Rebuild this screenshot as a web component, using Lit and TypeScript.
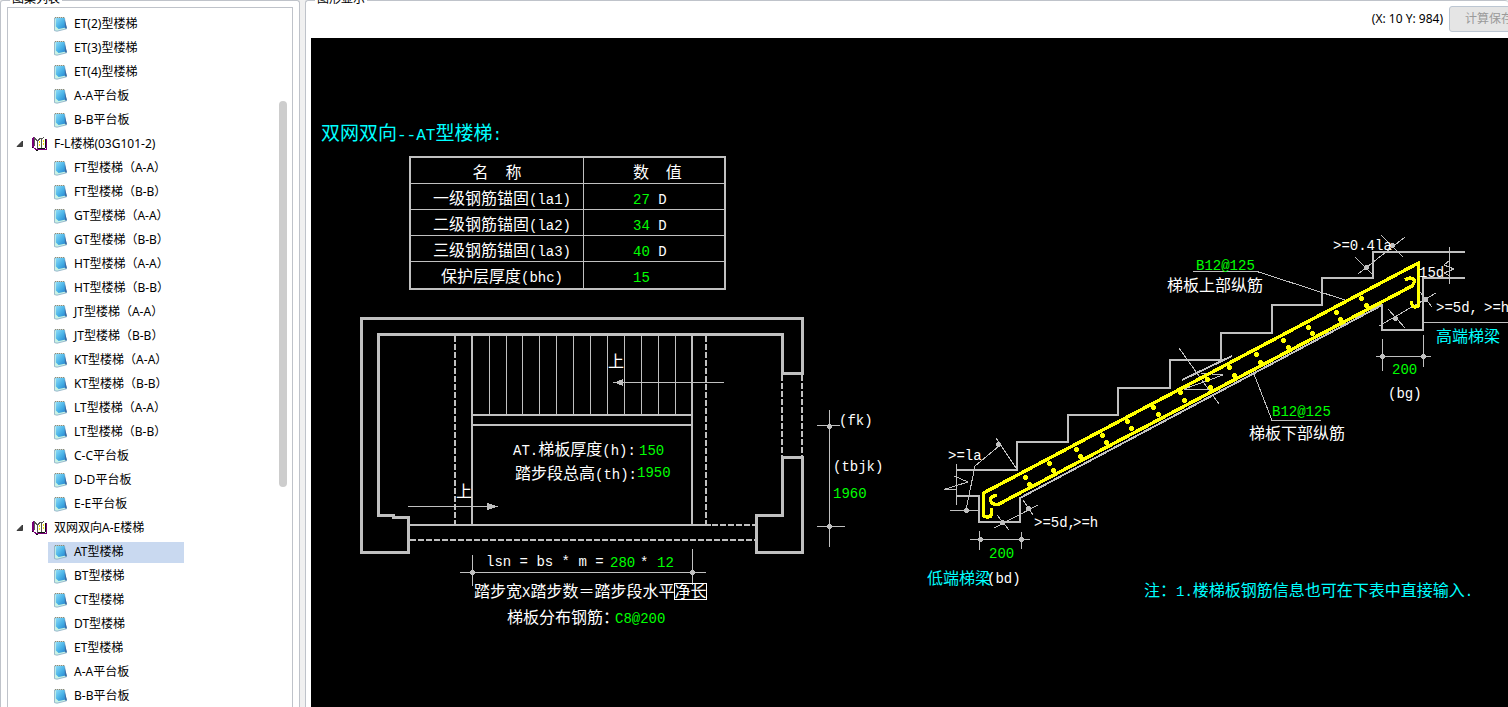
import { LitElement, html, svg, css } from "lit";
import { customElement, property, state } from "lit/decorators.js";
import { classMap } from "lit/directives/class-map.js";

type Row = { id: number; label: string; group?: boolean };

const ROWS: Row[] = [
  "ET(2)型楼梯", "ET(3)型楼梯", "ET(4)型楼梯", "A-A平台板", "B-B平台板",
  "#F-L楼梯(03G101-2)",
  "FT型楼梯（A-A）", "FT型楼梯（B-B）", "GT型楼梯（A-A）", "GT型楼梯（B-B）",
  "HT型楼梯（A-A）", "HT型楼梯（B-B）", "JT型楼梯（A-A）", "JT型楼梯（B-B）",
  "KT型楼梯（A-A）", "KT型楼梯（B-B）", "LT型楼梯（A-A）", "LT型楼梯（B-B）",
  "C-C平台板", "D-D平台板", "E-E平台板",
  "#双网双向A-E楼梯",
  "AT型楼梯", "BT型楼梯", "CT型楼梯", "DT型楼梯", "ET型楼梯", "A-A平台板", "B-B平台板",
].map((s, id) => ({ id, label: s.replace("#", ""), group: s.startsWith("#") }));

/* Splits a label into Latin and Chinese runs; each has its own font size. */
const split = (t: string) => t.match(/[\x20-\x7e]+|[^\x20-\x7e]+/g) ?? [];
const isLatin = (t: string) => /^[\x20-\x7e]/.test(t);

const noteIcon = html`<svg class="note" viewBox="0 0 14 16" width="14" height="16" aria-hidden="true">
  <defs><linearGradient id="n" x1="0" y1="0" x2="1" y2="1">
    <stop offset="0" stop-color="#8fdcf8"/><stop offset=".5" stop-color="#4bb4e8"/><stop offset="1" stop-color="#2483cc"/>
  </linearGradient></defs>
  <path d="M.5 2 L.5 14.6 L3 15.2 L12.6 12.8 L11.5 9 L10.5 2z" fill="#c9f2e4" stroke="#86a9c4" stroke-width=".8"/>
  <path d="M1.8 2 L10.4 2 L11.8 11.6 L4.6 13 L1.8 10.5z" fill="url(#n)"/>
  <path d="M10.6 3 L13 12.2 L11 12.6z" fill="#3c6fa8"/>
  <path d="M1 1.5 H11" stroke="#8c8d74" stroke-width="1.2" stroke-dasharray="1.2 .8"/>
</svg>`;

const bookIcon = html`<svg class="book" viewBox="0 0 16 16" width="16" height="16" aria-hidden="true" shape-rendering="crispEdges">
  <path d="M2 1 L5 4 V13 L2 11z" fill="#fff"/>
  <path d="M6 4 L8 2 H9 V11 L6 13z M10 3 L13 2 V11 L10 12z" fill="#fffff0"/>
  <path d="M2.5 1 V10 M2 1.5 L5 4.5 M5.5 4 V13 M6 4.5 L8.5 2 M9.5 2 V12 M10 2.5 L12.5 1.5" fill="none" stroke="#555"/>
  <path d="M7.5 5 V11 M11.5 4 V10" stroke="#f0e000" stroke-dasharray="2 1"/>
  <path d="M0.5 2 V11 M1.5 1 V12 M2 12.5 H4 M3 13.5 H15 M14.5 3 V14" fill="none" stroke="#780078"/>
  <path d="M13.5 3 V12 M6 12.5 H13 M4 14.5 H6 M0.5 11 V12" stroke="#111"/>
</svg>`;

@customElement("atlas-tree")
export class AtlasTree extends LitElement {
  @state() private selected = 22;

  static styles = css`
    :host { display: block; height: 100%; overflow: hidden; }
    .tree { list-style: none; margin: 0; padding: 4px 0 0; }
    .row { display: flex; align-items: center; height: 24px; padding-left: 40px; }
    .row.group { padding-left: 8px; }
    button {
      display: flex; align-items: center; height: 21px; width: 136px; padding: 0 0 0 6px;
      border: 0; background: none; color: #000; text-align: left; white-space: nowrap;
      font: 12px/20px "Noto Sans", "Noto Sans CJK SC", sans-serif;
    }
    .selected button { background: #c9d9f0; }
    .note { flex: none; margin-right: 6px; }
    .book { flex: none; margin: 0 6px 0 2px; }
    .arrow { flex: none; }
  `;

  render() {
    return html`<ul class="tree" role="tree">
      ${ROWS.map((r) => html`
        <li role="treeitem" aria-selected=${r.id === this.selected}
            class=${classMap({ row: true, group: !!r.group, selected: r.id === this.selected })}>
          ${r.group ? html`<svg class="arrow" viewBox="0 0 8 8" width="8" height="8" aria-hidden="true"><path d="M6.5 1 V6.5 H1z" fill="#444" stroke="#222" stroke-width=".8"/></svg>` : ""}
          <button type="button" @click=${() => (this.selected = r.id)}>
            ${r.group ? bookIcon : noteIcon}${r.label}
          </button>
        </li>`)}
    </ul>`;
  }
}

type Label = [number, number, string, string?];

const LABELS: Label[] = [
  [513, 455, "AT.梯板厚度(h):"], [639, 455, "150", "value"],
  [515, 479, "踏步段总高(th):"], [637, 477, "1950", "value"],
  [608, 367, "上"], [456, 497, "上"],
  [839, 425, "(fk)"], [833, 471, "(tbjk)"], [833, 498, "1960", "value"],
  [486, 566, "lsn = bs * m ="], [610, 567, "280", "value"], [640, 567, "*"], [657, 567, "12", "value"],
  [474, 597, "踏步宽X踏步数＝踏步段水平净长"],
  [507, 623, "梯板分布钢筋："], [615, 623, "C8@200", "value"],
  [948, 460, ">=la"], [1034, 527, ">=5d,"], [1073, 527, ">=h"],
  [989, 558, "200", "value"], [927, 584, "低端梯梁", "note"], [987, 583, "(bd)"],
  [1272, 416, "B12@125", "value"], [1249, 439, "梯板下部纵筋"],
  [1196, 270, "B12@125", "value"], [1167, 291, "梯板上部纵筋"],
  [1333, 250, ">=0.4la"], [1419, 277, "15d"],
  [1436, 312, ">=5d,"], [1484, 312, ">=h"], [1436, 342, "高端梯梁", "note"],
  [1392, 374, "200", "value"], [1388, 398, "(bg)"],
  [1144, 596, "注：1.楼梯板钢筋信息也可在下表中直接输入.", "note"],
];

const TREADS = [489, 506, 522, 539, 556, 573, 590, 607, 624, 641, 658, 675];

const BARS = [
  [1025, 477], [1029, 484], [1049, 463], [1053, 470], [1076, 449], [1080, 456],
  [1102, 435], [1106, 442], [1127, 421], [1131, 428], [1153, 407], [1158, 414],
  [1180, 392], [1184, 400], [1207, 379], [1210, 387], [1229, 367], [1234, 375],
  [1256, 354], [1260, 362], [1283, 340], [1288, 347], [1308, 327], [1312, 333],
  [1336, 312], [1340, 319], [1361, 298], [1366, 305],
];

const DOTS = [
  [829, 426], [829, 526], [472, 572], [692, 572], [998, 444], [966, 510],
  [1002, 522], [1028, 508], [980, 539], [1021, 539], [1392, 245], [1366, 267],
  [1395, 318], [1425, 299], [1382, 356], [1423, 356],
];

@customElement("stair-drawing")
export class StairDrawing extends LitElement {
  @property({ attribute: false }) anchors: [string, string, string][] = [
    ["一级钢筋锚固(la1)", "27", " D"], ["二级钢筋锚固(la2)", "34", " D"],
    ["三级钢筋锚固(la3)", "40", " D"], ["保护层厚度(bhc)", "15", ""],
  ];

  static styles = css`
    :host {
      display: block; position: relative; height: 100%; overflow: hidden; background: #000; color: #fff;
      font: 16px/24px "Noto Sans CJK SC", sans-serif;
    }
    .sheet { display: block; width: 100%; height: 100%; }
    .latin { font-family: "Liberation Mono", monospace; font-size: 14px; line-height: 1; white-space: pre; }
    text { fill: #fff; white-space: pre; }
    text.value { fill: #0f0; }
    text.note, text.title { fill: #0ff; }
    .title { font-size: 19px; }
    .title .latin { font-size: 16px; }
    .line { fill: none; stroke: #c0c0c0; shape-rendering: crispEdges; }
    .w1 { stroke-width: 1; }
    .w2 { stroke-width: 2; }
    .w3 { stroke-width: 3; }
    .dash { stroke-dasharray: 6 2; }
    .solid { fill: #c0c0c0; shape-rendering: crispEdges; }
    .steel { fill: none; stroke: #ff0; stroke-width: 3.4; shape-rendering: crispEdges; }
    .bar { fill: #ff0; shape-rendering: crispEdges; }
    .frame { stroke: #fff; }

    .anchors {
      position: absolute; left: 98px; top: 118px; width: 317px; border: 2px solid #c0c0c0;
      border-spacing: 0; table-layout: fixed;
    }
    .anchors th, .anchors td {
      height: 25px; padding: 0; font-weight: 400; line-height: 24px; border-bottom: 1px solid #c0c0c0; white-space: pre;
    }
    .anchors tr:last-child > * { border-bottom: 0; }
    .anchors .name { width: 172px; text-align: center; border-right: 1px solid #c0c0c0; }
    .anchors td.name { box-sizing: border-box; width: 173px; height: 26px; padding-left: 10px; }
    .anchors .amount { text-align: left; padding-left: 49px; }
    .green { color: #0f0; }
  `;

  private htmlRuns(t: string) {
    return split(t).map((r) => (isLatin(r) ? html`<span class="latin">${r}</span>` : r));
  }

  private svgRuns(t: string) {
    return split(t).map((r) => (isLatin(r) ? svg`<tspan class="latin">${r}</tspan>` : svg`<tspan>${r}</tspan>`));
  }

  private plan() {
    return svg`
      <path class="line w3" d="M782.5 373.5 H802.5 V318.5 H361.5 V552.5 H408.5 V517.5 H393.5 L393.5 515.5 H378.5 V334.5 H782.5z"/>
      <path class="line w3" d="M782.5 457.5 H802.5 V552.5 H756.5 V515.5 H782.5z"/>
      <path class="line w2 dash" d="M455 336 V525 M706 336 V525 M782 375 V456 M802 375 V456 M712 525 H756 M410 540 H756"/>
      <path class="line w2" d="M472 336 V525 M692 336 V525 M472 415 H692 M472 425 H692 M410 525 H711"/>
      <path class="line w1" d=${TREADS.map((x) => `M${x}.5 336 V414`).join(" ")}/>
      <path class="line w1" d="M613 382.5 H724 M408 506.5 H498"/>
      <path class="solid" d="M614 382.5 L623 379 V386z M498 506.5 L487 503 V510z"/>
      <path class="line w1" d="M829.5 410 V547 M817 425.5 H840 M817 526.5 H845"/>
      <path class="line w1" d="M460 572.5 H706 M472.5 555 V586 M692.5 549 V585"/>
      <rect class="line w1 frame" x="674.5" y="583.5" width="32" height="16"/>`;
  }

  private section() {
    return svg`
      <path class="line w2" d="M957 470 H1017 V442 H1068 V415 H1118 V388 H1170 V360 H1221 V333 H1272 V305 H1322 V278 H1373 V252 H1465"/>
      <path class="line w2" d="M1465 278 H1423 V330 H1382 V305 L1020 498 V522 H979 V496 H957"/>
      <path class="line w2" d="M1182 380 L1232 356"/>
      <path class="line w1" d="M1179 348 L1219 404 M1201 373 L1223 375 L1184 389 H1208"/>
      <path class="line w1" d="M1254 374 L1272 420.5 H1321 M1193 271.5 H1257 L1345 300"/>
      <path class="line w1" d="M956.5 464 V505 M954 476 L968 482 L944 489.5 H956 M950 510.5 H978 M966 510 L975 466 L999 446 M996 438 L1016 468"/>
      <path class="line w1" d="M994 528 L1038 505 M1023 500 L1033 515 M997 515 L1009 530"/>
      <path class="line w1" d="M970 539.5 H1030 M979.5 531 V550 M1021.5 532 V549"/>
      <path class="line w1" d="M1449.5 247 V284 M1450 260 L1444 265 L1454 269 L1444 273 L1450 276"/>
      <path class="line w1" d="M1381 235 L1403 257 M1405 237 L1358 274 M1355 257 L1373 275"/>
      <path class="line w1" d="M1379 326 L1436 293 M1388 309 L1405 328 M1417 288 L1432 307"/>
      <path class="line w1" d="M1423 322.5 H2400 M1376 356.5 H1431 M1382.5 339 V371 M1423.5 335 V367"/>
      <path class="steel" d="M991.5 508 V514 Q991.5 517 987 517 Q983.5 517 983.5 514 V493 L1418.5 263 V304 Q1418.5 307 1415 307 Q1411.5 307 1411.5 301"/>
      <path class="steel" d="M997 495.5 Q990 496 990.5 500 Q991 504.5 998 504.5 L1412 286 Q1415 283 1414 280 Q1411 276 1405 280"/>
      ${BARS.map(([x, y]) => svg`<circle class="bar" cx=${x + 0.5} cy=${y + 0.5} r="2.4"/>`)}`;
  }

  render() {
    return html`
      <svg class="sheet" role="img" aria-label="双网双向--AT型楼梯">
        <g transform="translate(-311 -38)">
          ${this.plan()} ${this.section()}
          ${DOTS.map(([x, y]) => svg`<circle class="solid" cx=${x + 0.5} cy=${y + 0.5} r="2.5"/>`)}
          <text class="title" x="321" y="140">${this.svgRuns("双网双向--AT型楼梯:")}</text>
          ${LABELS.map(([x, y, t, c]) => svg`<text class=${c ?? "plain"} x=${x} y=${y}>${this.svgRuns(t)}</text>`)}
        </g>
      </svg>
      <table class="anchors">
        <tr><th class="name" scope="col">${this.htmlRuns("名  称")}</th><th class="amount" scope="col">${this.htmlRuns("数  值")}</th></tr>
        ${this.anchors.map(([name, value, unit]) => html`<tr><td class="name">${this.htmlRuns(name)}</td><td class="amount"><span class="latin green">${value}</span><span class="latin">${unit}</span></td></tr>`)}
      </table>`;
  }
}

@customElement("app-root")
export class AppRoot extends LitElement {
  static styles = css`
    :host {
      display: grid; grid-template-columns: 300px minmax(0, 1fr); gap: 5px; height: 100vh; overflow: hidden;
      background: #f0f0f0; color: #000; font: 12px/16px "Noto Sans", "Noto Sans CJK SC", sans-serif;
    }
    .panel { position: relative; box-sizing: border-box; min-height: 0; background: #fff; border: solid #bfc3ca; border-width: 1px 1px 0; border-radius: 3px 3px 0 0; }
    .caption { position: absolute; left: 9px; top: -10px; margin: 0; padding: 0 2px; background: #fff; font: inherit; }
    .list { padding: 6px 6px 0; }
    .box { display: grid; grid-template-columns: minmax(0, 1fr) 8px; box-sizing: border-box; height: 100%; padding-right: 5px; border: 1px solid #bfc3ca; border-bottom: 0; }
    .thumb { height: 386px; margin-top: 93px; border-radius: 4px; background: #cdcdcd; }
    .view { display: grid; grid-template-rows: 37px minmax(0, 1fr); border-right: 0; padding-left: 5px; }
    .bar { display: flex; justify-content: flex-end; align-items: center; gap: 6px; margin-right: -21px; padding-bottom: 1px; white-space: nowrap; }
    .save { height: 26px; padding: 0 15px; border: 1px solid #bcc6d2; border-radius: 3px; background: #e5e5e5; color: #9a9a9a; font: inherit; }
  `;

  render() {
    return html`
      <section class="panel list">
        <h2 class="caption">图集列表</h2>
        <div class="box"><atlas-tree></atlas-tree><div class="thumb"></div></div>
      </section>
      <section class="panel view">
        <h2 class="caption">图形显示</h2>
        <div class="bar"><output>(X: 10 Y: 984)</output><button class="save" type="button" disabled>计算保存</button></div>
        <stair-drawing></stair-drawing>
      </section>`;
  }
}
